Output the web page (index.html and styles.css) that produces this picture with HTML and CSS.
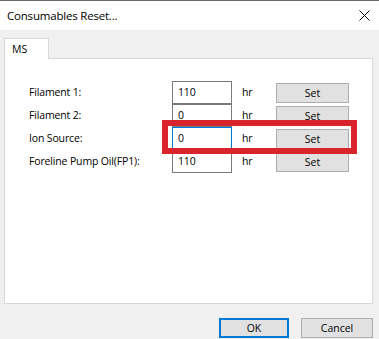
FILE: index.html
```html
<!DOCTYPE html>
<html lang="en">
<head>
    <meta charset="UTF-8">
    <title>Consumables Reset...</title>
    <link rel="stylesheet" href="styles.css">
</head>
<body>
    <div class="dialog">
        <div class="titlebar">
            <span class="title">Consumables Reset...</span>
            <svg class="close" width="11" height="11" viewBox="0 0 11 11">
                <path d="M0.5 0.5 L10.5 10.5 M10.5 0.5 L0.5 10.5" stroke="#000" stroke-width="1" fill="none"/>
            </svg>
        </div>
        <div class="body">
            <div class="tabs">
                <div class="tab">MS</div>
            </div>
            <div class="panel">
                <div class="rows">
                    <div class="row">
                        <label class="row-label">Filament 1:</label>
                        <div class="edit">110</div>
                        <span class="unit">hr</span>
                        <button class="btn">Set</button>
                    </div>
                    <div class="row">
                        <label class="row-label">Filament 2:</label>
                        <div class="edit">0</div>
                        <span class="unit">hr</span>
                        <button class="btn">Set</button>
                    </div>
                    <div class="row">
                        <label class="row-label">Ion Source:</label>
                        <div class="edit focused">0</div>
                        <span class="unit">hr</span>
                        <button class="btn">Set</button>
                        <div class="highlight"></div>
                    </div>
                    <div class="row">
                        <label class="row-label">Foreline Pump Oil(FP1):</label>
                        <div class="edit">110</div>
                        <span class="unit">hr</span>
                        <button class="btn">Set</button>
                    </div>
                </div>
            </div>
            <div class="footer">
                <button class="btn btn-default">OK</button>
                <button class="btn">Cancel</button>
            </div>
        </div>
    </div>
</body>
</html>
```

FILE: styles.css
```css
body {
    margin: 0;
    padding: 0;
    font-family: "Open Sans", "Liberation Sans", sans-serif;
    color: #000;
    background: #f0f0f0;
}
.dialog {
    width: 379px;
    height: 339px;
    background: #f0f0f0;
    overflow: hidden;
}
.titlebar {
    height: 30px;
    background: #fff;
    border-top: 1px solid #6b6b6b;
    box-sizing: border-box;
    display: flex;
    align-items: center;
    justify-content: space-between;
    padding: 0 8px 0 7px;
}
.title {
    font-size: 11.5px;
    letter-spacing: -0.2px;
    padding-bottom: 1px;
}
.close {
    margin-right: 1px;
}
.body {
    padding: 8px 6px 0 4px;
}
.tabs {
    display: flex;
    height: 20px;
}
.tab {
    width: 45px;
    box-sizing: border-box;
    background: #fff;
    border: 1px solid #d9d9d9;
    border-bottom: none;
    font-size: 10.5px;
    padding: 3px 0 0 7px;
    position: relative;
    z-index: 1;
    height: 21px;
}
.panel {
    background: #fff;
    border: 1px solid #d9d9d9;
    height: 246px;
    box-sizing: border-box;
    padding: 22px 0 0 24px;
}
.rows {
    display: flex;
    flex-direction: column;
}
.row {
    display: grid;
    grid-template-columns: 143px 60px 44px 73px;
    height: 23px;
    align-items: start;
    font-size: 10.5px;
    letter-spacing: -0.15px;
    position: relative;
}
.row-label {
    padding-top: 4px;
}
.edit {
    height: 23px;
    box-sizing: border-box;
    border: 1px solid #7a7a7a;
    background: #fff;
    padding: 3px 0 0 5px;
}
.edit.focused {
    border-color: #0078d7;
    position: relative;
    z-index: 1;
}
.unit {
    padding: 4px 0 0 10px;
}
.btn {
    font-family: "Open Sans", "Liberation Sans", sans-serif;
    font-size: 10.5px;
    background: #e1e1e1;
    border: 1px solid #adadad;
    padding: 0;
    margin-top: 2px;
    height: 20px;
    color: #000;
}
.highlight {
    position: absolute;
    left: 133px;
    top: -7px;
    width: 195px;
    height: 34px;
    box-sizing: border-box;
    border: 6px solid #d9242e;
    z-index: 2;
}
.footer {
    display: flex;
    justify-content: flex-end;
    gap: 12px;
    padding-top: 12px;
}
.footer .btn {
    width: 72px;
    height: 20px;
}
.footer .btn-default {
    width: 70px;
    border: 2px solid #0078d7;
}
```
